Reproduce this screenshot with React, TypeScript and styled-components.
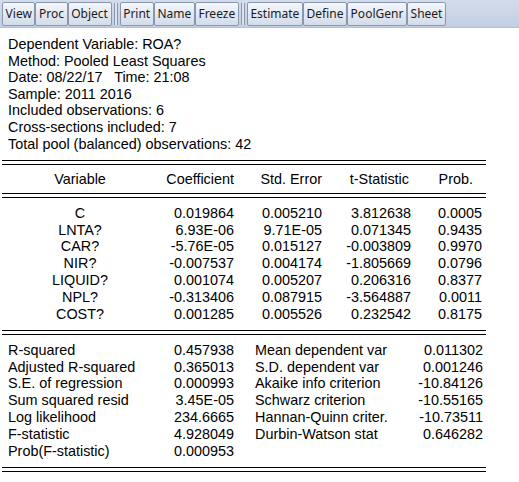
import styled, { createGlobalStyle } from 'styled-components';

const GlobalStyle = createGlobalStyle`
  html, body {
    margin: 0;
    padding: 0;
    background: #ffffff;
  }
`;

const toolbarItems: (string | null)[] = [
  'View',
  'Proc',
  'Object',
  null,
  'Print',
  'Name',
  'Freeze',
  null,
  'Estimate',
  'Define',
  'PoolGenr',
  'Sheet',
];

const infoLines = [
  'Dependent Variable: ROA?',
  'Method: Pooled Least Squares',
  'Date: 08/22/17   Time: 21:08',
  'Sample: 2011 2016',
  'Included observations: 6',
  'Cross-sections included: 7',
  'Total pool (balanced) observations: 42',
];

const coefRows = [
  ['C', '0.019864', '0.005210', '3.812638', '0.0005'],
  ['LNTA?', '6.93E-06', '9.71E-05', '0.071345', '0.9435'],
  ['CAR?', '-5.76E-05', '0.015127', '-0.003809', '0.9970'],
  ['NIR?', '-0.007537', '0.004174', '-1.805669', '0.0796'],
  ['LIQUID?', '0.001074', '0.005207', '0.206316', '0.8377'],
  ['NPL?', '-0.313406', '0.087915', '-3.564887', '0.0011'],
  ['COST?', '0.001285', '0.005526', '0.232542', '0.8175'],
];

const statRows = [
  ['R-squared', '0.457938', 'Mean dependent var', '0.011302'],
  ['Adjusted R-squared', '0.365013', 'S.D. dependent var', '0.001246'],
  ['S.E. of regression', '0.000993', 'Akaike info criterion', '-10.84126'],
  ['Sum squared resid', '3.45E-05', 'Schwarz criterion', '-10.55165'],
  ['Log likelihood', '234.6665', 'Hannan-Quinn criter.', '-10.73511'],
  ['F-statistic', '4.928049', 'Durbin-Watson stat', '0.646282'],
  ['Prob(F-statistic)', '0.000953', '', ''],
];

function App() {
  return (
    <Window>
      <GlobalStyle />
      <Toolbar>
        {toolbarItems.map((item, i) =>
          item === null ? (
            <ToolSep key={i} />
          ) : (
            <ToolButton key={i} type="button">
              {item}
            </ToolButton>
          )
        )}
      </Toolbar>

      <Output>
        <InfoBlock>
          {infoLines.map((line) => (
            <InfoLine key={line}>{line}</InfoLine>
          ))}
        </InfoBlock>

        <DoubleRule />
        <HeaderGrid>
          <Cell $align="center">Variable</Cell>
          <Cell $align="right" $pad={4}>Coefficient</Cell>
          <Cell $align="right" $pad={4}>Std. Error</Cell>
          <Cell $align="right" $pad={6}>t-Statistic</Cell>
          <Cell $align="right" $pad={13}>Prob.</Cell>
        </HeaderGrid>
        <DoubleRule />

        <CoefGrid>
          {coefRows.map((row) =>
            row.map((value, i) => (
              <Cell
                key={row[0] + i}
                $align={i === 0 ? 'center' : 'right'}
                $pad={i === 0 ? 0 : 4}
              >
                {value}
              </Cell>
            ))
          )}
        </CoefGrid>
        <DoubleRule />

        <StatGrid>
          {statRows.map((row) => (
            <StatRow key={row[0]}>
              <Cell $align="left" $pad={6}>{row[0]}</Cell>
              <Cell $align="right" $pad={4}>{row[1]}</Cell>
              <Cell $align="left" $pad={17}>{row[2]}</Cell>
              <Cell $align="right" $pad={3}>{row[3]}</Cell>
            </StatRow>
          ))}
        </StatGrid>
        <DoubleRule />
      </Output>
    </Window>
  );
}

const Window = styled.div`
  width: 519px;
  height: 482px;
  overflow: hidden;
  background: #ffffff;
`;

const Toolbar = styled.div`
  display: flex;
  align-items: center;
  height: 28px;
  padding: 0 2px;
  box-sizing: border-box;
  background: linear-gradient(#d3dceb, #c2cfe2);
  border-bottom: 1px solid #b4c1d4;
`;

const ToolButton = styled.button`
  height: 24px;
  margin: 0;
  padding: 0 2.6px;
  border: 1px solid #8897ad;
  border-radius: 2px;
  background: linear-gradient(#f4f7fb 0%, #e3e9f2 50%, #d3dcea 100%);
  font-family: 'Noto Sans', 'Open Sans', sans-serif;
  font-size: 12px;
  color: #1b1b1b;
  line-height: 22px;
  cursor: default;
`;

const ToolSep = styled.div`
  width: 2px;
  height: 22px;
  margin: 0 2px;
  border-left: 1px solid #8a98ac;
  border-right: 1px solid #8a98ac;
  background: #dbe3ee;
`;

const Output = styled.div`
  font-family: 'Liberation Sans', Arial, sans-serif;
  font-size: 14.4px;
  color: #000000;
`;

const InfoBlock = styled.div`
  padding: 8px 0 0 8px;
  margin-bottom: 8px;
`;

const InfoLine = styled.div`
  line-height: 16.6px;
  white-space: pre;
`;

const DoubleRule = styled.div`
  width: 484px;
  height: 3px;
  margin-left: 2px;
  border-top: 1px solid #000000;
  border-bottom: 1px solid #000000;
`;

const HeaderGrid = styled.div`
  display: grid;
  grid-template-columns: 156px 80px 88px 89px 71px;
  margin-left: 2px;
  height: 28px;
  line-height: 28px;
`;

const CoefGrid = styled.div`
  display: grid;
  grid-template-columns: 156px 80px 88px 89px 71px;
  grid-auto-rows: 16.8px;
  margin-left: 2px;
  padding: 6.6px 0 7.8px;
  line-height: 16.8px;
`;

const StatGrid = styled.div`
  margin-left: 2px;
  padding: 6.6px 0 7.8px;
`;

const StatRow = styled.div`
  display: grid;
  grid-template-columns: 156px 80px 168px 80px;
  height: 16.8px;
  line-height: 16.8px;
`;

const Cell = styled.div<{ $align: 'left' | 'center' | 'right'; $pad?: number }>`
  text-align: ${(p) => p.$align};
  padding-left: ${(p) => (p.$align === 'left' ? p.$pad ?? 0 : 0)}px;
  padding-right: ${(p) => (p.$align === 'right' ? p.$pad ?? 0 : 0)}px;
  white-space: nowrap;
`;

export default App;
